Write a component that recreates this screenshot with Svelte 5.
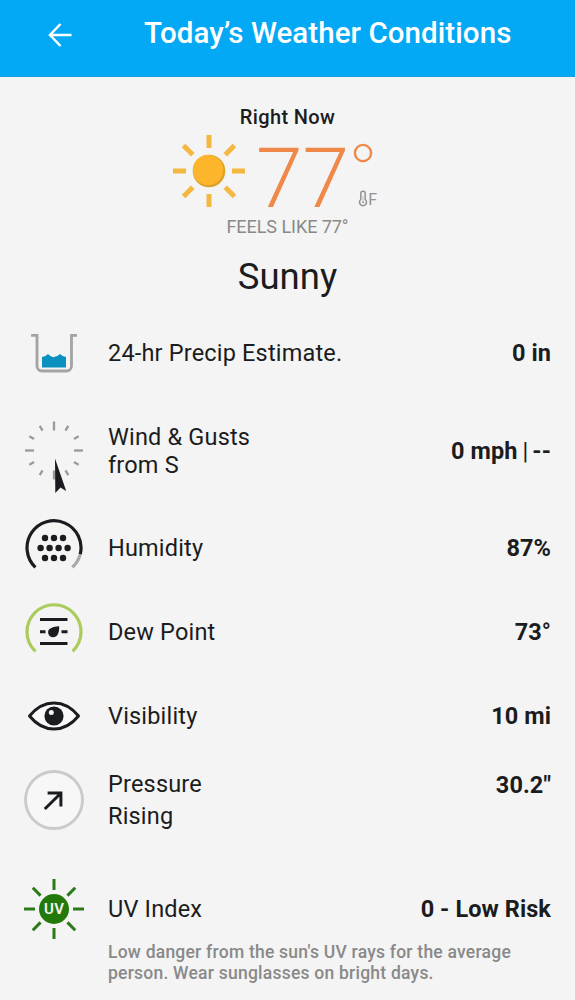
<script>
  const ticks = Array.from({ length: 12 }, (_, i) => i * 30);
  const rays = Array.from({ length: 8 }, (_, i) => i * 45);
  const drops = [
    [21, 20], [30, 20], [39, 20],
    [16.6, 30], [25.6, 30], [34.6, 30], [43.6, 30],
    [21, 40], [30, 40], [39, 40]
  ];
  const rows = [
    { icon: 'precip', label: ['24-hr Precip Estimate.'], value: '0 in' },
    { icon: 'wind', label: ['Wind & Gusts', 'from S'], value: '0 mph', gusts: '--' },
    { icon: 'humidity', label: ['Humidity'], value: '87%' },
    { icon: 'dew', label: ['Dew Point'], value: '73°' },
    { icon: 'visibility', label: ['Visibility'], value: '10 mi' },
    { icon: 'pressure', label: ['Pressure', 'Rising'], value: '30.2"' },
    { icon: 'uv', label: ['UV Index'], value: '0 - Low Risk' }
  ];
</script>

<div class="screen">
  <header>
    <svg class="back" width="26" height="28" viewBox="0 0 26 28" fill="none" stroke="#fff" stroke-width="2.5">
      <path d="M24.5 14H3M13.5 3 3 14l10.500 11" />
    </svg>
    <h1>Today’s Weather Conditions</h1>
  </header>

  <section class="now">
    <h2>Right Now</h2>
    <div class="current">
      <svg class="sun" width="74" height="74" viewBox="-37 -37 74 74">
        {#each rays as a}
          <rect x="-2.5" y="-36" width="5" height="13" fill="#f4b73f" transform="rotate({a})" />
        {/each}
        <circle r="16.3" fill="#dda029" />
        <circle cx="-.9" cy="-.9" r="15.2" fill="#fdb52b" />
      </svg>
      <span class="temp">77</span>
      <div class="unit">
        <svg width="20" height="20" viewBox="0 0 20 20" fill="none" stroke="#ef8848" stroke-width="2.4">
          <circle cx="10" cy="10" r="8.1" />
        </svg>
        <div class="scale">
          <svg width="10" height="18" viewBox="0 0 10 18" fill="none" stroke="#929292" stroke-width="1.5">
            <path d="M2.8 9.5V3.4a2.2 2.2 0 0 1 4.4 0v6.1a3.5 3.5 0 1 1-4.4 0Z" />
            <path d="M5 6v6" stroke-width=".5" />
            <circle cx="5" cy="12.3" r=".7" stroke-width=".8" />
          </svg>
          <span>F</span>
        </div>
      </div>
    </div>
    <p class="feels">FEELS LIKE 77°</p>
    <p class="sky">Sunny</p>
  </section>

  <main>
    {#each rows as row}
      <div class="row {row.icon}">
        <div class="icon">
          {#if row.icon === 'precip'}
            <svg width="60" height="60" viewBox="0 0 60 60">
              <path d="M7.1 12.3H13V43a5 5 0 0 0 5 5h24.500a5 5 0 0 0 5-5V12.3h5.500" fill="none" stroke="#a3a3a3" stroke-width="2.8" />
              <path d="M18 34q3.300 0 6-3 3.500 3.700 6 3.100 2.500 0 6-3.200 3.300 3 6 3.100v10.500H18Z" fill="#0b91bf" />
            </svg>
          {:else if row.icon === 'wind'}
            <svg width="60" height="88" viewBox="0 0 60 88">
              {#each ticks as a}
                <path d={a % 90 === 0 ? 'M0-29V-20' : 'M0-28.5V-23'} transform="translate(30 43.5) rotate({a})" stroke="#9a9a9a" stroke-width="2.3" />
              {/each}
              <path d="M31 51.5 42.2 84 36.5 80.500 31.3 86Z" fill="#1b1c20" />
            </svg>
          {:else if row.icon === 'humidity'}
            <svg width="60" height="60" viewBox="0 0 60 60">
              <path d="M11.4 49.3A27 27 0 1 1 56.2 36.4" fill="none" stroke="#1b1c20" stroke-width="3.2" />
              <path d="M56.2 36.4A27 27 0 0 1 48.4 49.3" fill="none" stroke="#a8a8a8" stroke-width="3.2" />
              {#each drops as [x, y]}
                <circle cx={x} cy={y} r="3.2" fill="#1b1c20" />
              {/each}
            </svg>
          {:else if row.icon === 'dew'}
            <svg width="60" height="60" viewBox="0 0 60 60">
              <path d="M11.4 49.3A27 27 0 1 1 48.6 49.3" fill="none" stroke="#a9cc5c" stroke-width="3.2" />
              <path d="M16 17.5h27.500M16 41.5h27.500M16 29.8h5.500M37.5 29.8h6" stroke="#1b1c20" stroke-width="3" />
              <path d="M35.2 24.3c.2 6.400-1.600 11-6.200 11a4.900 4.900 0 0 1-4.900-5.200c0-3.800 4.900-5.300 11.100-5.800Z" fill="#1b1c20" />
            </svg>
          {:else if row.icon === 'visibility'}
            <svg width="60" height="60" viewBox="0 0 60 60">
              <path d="M5.5 30C12 22 20.5 17 30 17s18 5 24.500 13C48 38 39.5 43 30 43S12 38 5.5 30Z" fill="#f9f9f9" stroke="#1b1c20" stroke-width="3" stroke-linejoin="round" />
              <circle cx="30" cy="30" r="9.6" fill="#1b1c20" />
              <circle cx="27.3" cy="26.5" r="2.5" fill="#f4f4f4" />
            </svg>
          {:else if row.icon === 'pressure'}
            <svg width="60" height="60" viewBox="0 0 60 60" fill="none">
              <circle cx="30" cy="30" r="28.5" fill="#f7f7f7" stroke="#cacaca" stroke-width="2.8" />
              <path d="M20.8 39 36.8 23.2M23.6 23.1h13.300v13.300" stroke="#1b1c20" stroke-width="3" />
            </svg>
          {:else}
            <svg width="60" height="60" viewBox="-30 -30 60 60">
              {#each rays as a}
                <path d="M0-30V-19" transform="rotate({a})" stroke="#2b7a18" stroke-width="3" />
              {/each}
              <circle r="15" fill="#237a0b" />
              <text x=".3" y="5.4" text-anchor="middle">UV</text>
            </svg>
          {/if}
        </div>
        <div class="label">
          {#each row.label as line}<span>{line}</span>{/each}
        </div>
        <div class="value">
          {row.value}{#if row.gusts}<span class="bar">|</span>{row.gusts}{/if}
        </div>
      </div>
    {/each}
    <p class="advice">Low danger from the sun's UV rays for the average<br />person. Wear sunglasses on bright days.</p>
  </main>
</div>

<style>
  :global(body) { background: #f4f4f4; }
  .screen {
    width: 575px;
    height: 1000px;
    overflow: hidden;
    background: #f4f4f4;
    color: #1b1c20;
    font-family: Roboto, "Liberation Sans", sans-serif;
  }
  h1, h2, p { margin: 0; }
  svg { display: block; flex: none; }
  header {
    box-sizing: border-box;
    height: 77px;
    display: flex;
    align-items: flex-start;
    padding: 12px 0 0 47px;
    background: #03a9f5;
    border-bottom: 1px solid #169fe0;
  }
  .back { margin-top: 9px; }
  h1 {
    margin-left: 71px;
    color: #fff;
    font-size: 29.5px;
    line-height: 42px;
    font-weight: 500;
    letter-spacing: .07px;
    white-space: nowrap;
  }
  .now { height: 234px; text-align: center; padding-top: 26px; box-sizing: border-box; }
  h2 { font-size: 20px; line-height: 28px; font-weight: 500; letter-spacing: .35px; }
  .current { display: flex; height: 82px; padding-left: 172px; }
  .sun { margin-top: 3px; }
  .temp {
    margin: 17px 0 0 10px;
    color: #ef8848;
    font-size: 84px;
    line-height: 62px;
    height: 62px;
    font-weight: 300;
  }
  .unit { margin-left: 4px; padding-top: 12px; }
  .scale {
    display: flex;
    align-items: center;
    margin: 25px 0 0 5px;
    color: #929292;
    font-size: 16px;
    line-height: 20px;
  }
  .scale span { padding-top: 2px; }
  .feels { color: #898989; font-size: 18px; line-height: 28px; letter-spacing: -.05px; }
  .sky { font-size: 36.5px; line-height: 50px; margin-top: 11px; }
  .row {
    display: grid;
    grid-template-columns: 60px 1fr auto;
    column-gap: 24px;
    align-items: center;
    height: 84px;
    padding: 0 24px;
    font-size: 23.5px;
    line-height: 28px;
  }
  .label { letter-spacing: .18px; }
  .label span { display: block; }
  .value { font-weight: 700; letter-spacing: .08px; }
  .bar { font-weight: 400; padding: 0 4px 0 5px; }
  .wind { height: 111px; }
  .pressure .label { line-height: 32px; }
  .pressure .value { align-self: start; padding-top: 13px; }
  .uv { height: 60px; margin-top: 37px; }
  .uv text { fill: #f4f4f4; font-size: 15px; font-weight: 600; letter-spacing: .6px; }
  .advice {
    padding: 3px 0 0 108px;
    color: #898989;
    font-size: 17.5px;
    line-height: 21px;
    font-weight: 500;
    letter-spacing: .23px;
  }
</style>
